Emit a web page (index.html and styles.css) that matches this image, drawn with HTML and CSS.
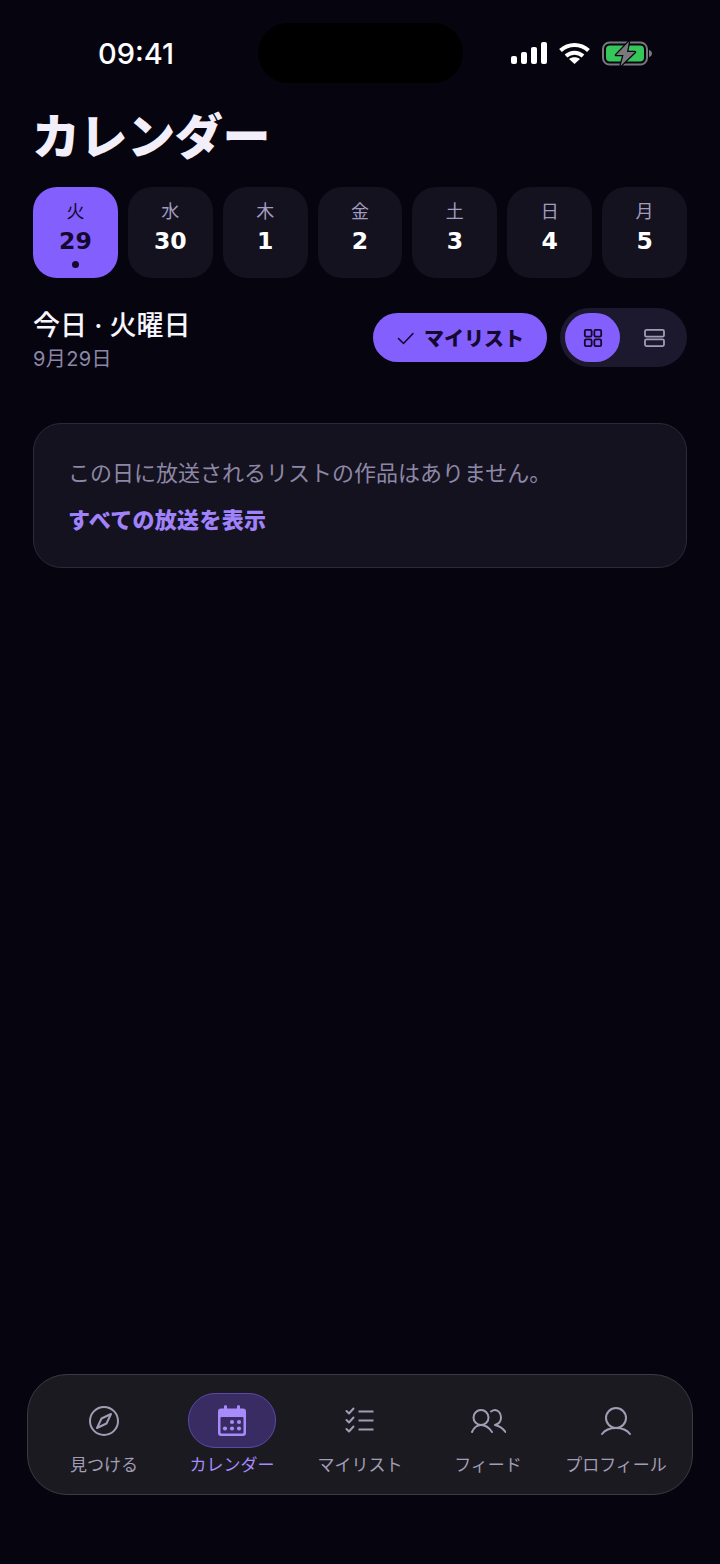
FILE: index.html
```html
<!DOCTYPE html>
<html lang="ja">
<head>
    <meta charset="UTF-8">
    <meta name="viewport" content="width=device-width, initial-scale=1.0">
    <title>カレンダー</title>
    <link rel="stylesheet" href="styles.css">
</head>
<body>
    <div class="screen">
        <div class="status-bar">
            <span class="time">09:41</span>
            <div class="island"></div>
            <div class="status-icons">
                <svg width="36" height="22" viewBox="0 0 36 22" fill="#fff">
                    <rect x="0" y="14" width="6" height="8" rx="2"/>
                    <rect x="10" y="10" width="6" height="12" rx="2"/>
                    <rect x="20" y="5" width="6" height="17" rx="2"/>
                    <rect x="30" y="0" width="6" height="22" rx="2"/>
                </svg>
                <svg width="31" height="22" viewBox="0 0 31 22" fill="none" stroke="#fff" stroke-width="4">
                    <path d="M1.500 8.500C9.500 1 21.500 1 29.500 8.500"/>
                    <path d="M7 14C12 9.500 19 9.500 24 14"/>
                    <path d="M15.500 22L10 17C13 14.600 18 14.600 21 17Z" fill="#fff" stroke="none"/>
                </svg>
                <svg width="50" height="25" viewBox="0 0 50 25">
                    <rect x="1" y="1.500" width="44" height="22" rx="6.500" fill="none" stroke="#77777c" stroke-width="2"/>
                    <rect x="4" y="4.500" width="38" height="16" rx="4" fill="#34c759"/>
                    <path d="M47 9C49 9.500 50 11 50 12.500S49 15.500 47 16Z" fill="#77777c"/>
                    <path d="M27 0.500L14 14H21.500L18.500 25L33 11H25Z" fill="#7a7a7e" stroke="#06040f" stroke-width="2.500" stroke-linejoin="round" paint-order="stroke"/>
                </svg>
            </div>
        </div>

        <h1 class="page-title">カレンダー</h1>

        <div class="day-strip">
            <div class="day-chip selected"><span class="day-name">火</span><span class="day-num">29</span><span class="day-dot"></span></div>
            <div class="day-chip"><span class="day-name">水</span><span class="day-num">30</span></div>
            <div class="day-chip"><span class="day-name">木</span><span class="day-num">1</span></div>
            <div class="day-chip"><span class="day-name">金</span><span class="day-num">2</span></div>
            <div class="day-chip"><span class="day-name">土</span><span class="day-num">3</span></div>
            <div class="day-chip"><span class="day-name">日</span><span class="day-num">4</span></div>
            <div class="day-chip"><span class="day-name">月</span><span class="day-num">5</span></div>
        </div>

        <div class="date-row">
            <div class="date-info">
                <div class="date-title">今日 · 火曜日</div>
                <div class="date-sub">9月29日</div>
            </div>
            <button class="list-btn">
                <svg width="20" height="20" viewBox="0 0 20 20" fill="none" stroke="#14082e" stroke-width="1.600" stroke-linecap="round" stroke-linejoin="round">
                    <path d="M2.500 10.500L7.500 15.500L17 5.500"/>
                </svg>
                マイリスト
            </button>
            <div class="view-toggle">
                <div class="toggle-item active">
                    <svg width="20" height="20" viewBox="0 0 22 22" fill="none" stroke="#14082e" stroke-width="2">
                        <rect x="2" y="2" width="7.500" height="7.500" rx="1.500"/>
                        <rect x="12.500" y="2" width="7.500" height="7.500" rx="1.500"/>
                        <rect x="2" y="12.500" width="7.500" height="7.500" rx="1.500"/>
                        <rect x="12.500" y="12.500" width="7.500" height="7.500" rx="1.500"/>
                    </svg>
                </div>
                <div class="toggle-item">
                    <svg width="23" height="20" viewBox="0 0 23 20" fill="none" stroke="#a29db5" stroke-width="1.800">
                        <rect x="2" y="1.900" width="19" height="6.800" rx="1.500"/>
                        <rect x="2" y="11.300" width="19" height="6.800" rx="1.500"/>
                    </svg>
                </div>
            </div>
        </div>

        <div class="empty-card">
            <p class="empty-text">この日に放送されるリストの作品はありません。</p>
            <a class="empty-link">すべての放送を表示</a>
        </div>

        <nav class="tab-bar">
            <div class="tab">
                <div class="tab-icon">
                    <svg width="32" height="32" viewBox="0 0 32 32" fill="none" stroke="#a29db5" stroke-width="2">
                        <circle cx="16" cy="16" r="14"/>
                        <path d="M23 9L18.500 18.500L9 23L13.500 13.500Z" stroke-linejoin="round"/>
                    </svg>
                </div>
                <span class="tab-label">見つける</span>
            </div>
            <div class="tab active">
                <div class="tab-icon">
                    <svg width="30" height="32" viewBox="0 0 30 32" fill="#a78bfa">
                        <path d="M7 1.500a1.500 1.500 0 0 1 3 0V3.500H20V1.500a1.500 1.500 0 0 1 3 0V3.500H26a3 3 0 0 1 3 3V28a3 3 0 0 1-3 3H4a3 3 0 0 1-3-3V6.500a3 3 0 0 1 3-3H7Z"/>
                        <rect x="3.500" y="12" width="23" height="16.500" rx="1" fill="#382c63"/>
                        <circle cx="15" cy="17" r="2.100"/><circle cx="22" cy="17" r="2.100"/>
                        <circle cx="8" cy="23.500" r="2.100"/><circle cx="15" cy="23.500" r="2.100"/><circle cx="22" cy="23.500" r="2.100"/>
                    </svg>
                </div>
                <span class="tab-label">カレンダー</span>
            </div>
            <div class="tab">
                <div class="tab-icon">
                    <svg width="30" height="28" viewBox="0 0 30 28" fill="none" stroke="#a29db5" stroke-width="2" stroke-linecap="round" stroke-linejoin="round">
                        <path d="M1.500 4L4 6.500L8.500 1.500"/>
                        <path d="M1.500 13L4 15.500L8.500 10.500"/>
                        <path d="M1.500 22L4 24.500L8.500 19.500"/>
                        <path d="M13.500 4.500H28.500M13.500 13.500H28.500M13.500 22.500H28.500" stroke-linecap="butt"/>
                    </svg>
                </div>
                <span class="tab-label">マイリスト</span>
            </div>
            <div class="tab">
                <div class="tab-icon">
                    <svg width="35" height="24" viewBox="0 0 35 24" fill="none" stroke="#a29db5" stroke-width="2" stroke-linecap="round" stroke-linejoin="round">
                        <circle cx="10" cy="8.500" r="7.500"/>
                        <path d="M1 23C3 18.500 6 16 10 16S18 18.500 21 23"/>
                        <path d="M20 2.500C21.500 1.500 23 1 24 1C27.500 1 30 4.500 30 8.500S27.500 15 24 16C28.500 17 32 19.500 34.500 23"/>
                    </svg>
                </div>
                <span class="tab-label">フィード</span>
            </div>
            <div class="tab">
                <div class="tab-icon">
                    <svg width="30" height="28" viewBox="0 0 30 28" fill="none" stroke="#a29db5" stroke-width="2" stroke-linecap="round">
                        <circle cx="15" cy="11" r="10"/>
                        <path d="M1 27C4 23 9 21 15 21S26 23 29 27"/>
                    </svg>
                </div>
                <span class="tab-label">プロフィール</span>
            </div>
        </nav>
    </div>
</body>
</html>
```

FILE: styles.css
```css
* {
    box-sizing: border-box;
}

html, body {
    margin: 0;
    padding: 0;
}

body {
    background-color: #06040f;
    color: #fff;
    font-family: "Inter", "Noto Sans CJK JP", sans-serif;
}

.screen {
    position: relative;
    width: 720px;
    height: 1564px;
    padding: 0 33px;
    overflow: hidden;
}

.status-bar {
    display: flex;
    justify-content: space-between;
    align-items: center;
    height: 106px;
    padding: 0 35px 0 65px;
    margin-bottom: 1px;
}

.time {
    font-size: 29px;
    font-weight: 500;
    color: #fff;
}

.island {
    position: absolute;
    left: 258px;
    top: 23px;
    width: 205px;
    height: 60px;
    border-radius: 30px;
    background-color: #000;
}

.status-icons {
    display: flex;
    align-items: center;
    gap: 12px;
}

.page-title {
    margin: 0 0 20px -1px;
    font-size: 48px;
    line-height: 60px;
    font-weight: 900;
    letter-spacing: -0.4px;
    color: #f2effb;
}

.day-strip {
    display: flex;
    gap: 10px;
}

.day-chip {
    display: flex;
    flex-direction: column;
    align-items: center;
    flex: 1;
    height: 91px;
    padding-top: 14px;
    border-radius: 24px;
    background-color: #14121f;
}

.day-chip.selected {
    background-color: #8360fd;
    color: #14082e;
}

.day-name {
    font-size: 18px;
    line-height: 22px;
    color: #a29cc0;
}

.day-chip.selected .day-name {
    color: #14082e;
}

.day-num {
    margin-top: 3px;
    font-family: "DejaVu Sans", sans-serif;
    font-size: 23.500px;
    line-height: 30px;
    font-weight: 700;
}

.day-dot {
    width: 7px;
    height: 7px;
    margin-top: 5px;
    border-radius: 50%;
    background-color: #14082e;
}

.date-row {
    display: flex;
    align-items: flex-start;
    margin-top: 29px;
}

.date-info {
    flex: 1;
    margin-top: 1px;
}

.date-title {
    font-size: 27px;
    line-height: 36px;
    font-weight: 500;
    color: #f7f5fd;
}

.date-sub {
    font-size: 20px;
    line-height: 30px;
    letter-spacing: 0.4px;
    color: #8d87a6;
}

.list-btn {
    display: flex;
    align-items: center;
    justify-content: center;
    gap: 8px;
    width: 174px;
    height: 49px;
    margin: 6px 13px 0 0;
    border: none;
    border-radius: 25px;
    background-color: #8360fd;
    color: #14082e;
    font-family: inherit;
    font-size: 20px;
    font-weight: 900;
}

.view-toggle {
    display: flex;
    align-items: center;
    justify-content: space-between;
    width: 127px;
    height: 59px;
    margin-top: 1px;
    padding: 5px;
    border-radius: 30px;
    background-color: #1c192e;
}

.toggle-item {
    display: flex;
    align-items: center;
    justify-content: center;
    width: 55px;
    height: 49px;
    border-radius: 25px;
}

.toggle-item.active {
    background-color: #8360fd;
}

.empty-card {
    margin-top: 49px;
    height: 145px;
    padding: 34px 34px 0;
    border: 1px solid #2c2a3a;
    border-radius: 28px;
    background-color: #14121f;
}

.empty-text {
    margin: 0;
    font-size: 22px;
    line-height: 30px;
    color: #8d87a6;
}

.empty-link {
    display: block;
    margin-top: 17px;
    font-size: 22px;
    line-height: 30px;
    font-weight: 900;
    letter-spacing: 0.3px;
    color: #a083fb;
}

.tab-bar {
    position: absolute;
    left: 27px;
    top: 1374px;
    display: flex;
    justify-content: space-between;
    width: 666px;
    height: 121px;
    padding: 18px 12px 0;
    border: 1px solid #3a3944;
    border-radius: 40px;
    background-color: #1b1a21;
}

.tab {
    display: flex;
    flex-direction: column;
    align-items: center;
    width: 128px;
}

.tab-icon {
    display: flex;
    align-items: center;
    justify-content: center;
    width: 88px;
    height: 55px;
    border: 1px solid transparent;
    border-radius: 27px;
}

.tab.active .tab-icon {
    background-color: #382c63;
    border-color: #5a48a8;
}

.tab-label {
    margin-top: 3px;
    font-size: 17px;
    line-height: 28px;
    white-space: nowrap;
    color: #a29db5;
}

.tab.active .tab-label {
    color: #a78bfa;
}
```
